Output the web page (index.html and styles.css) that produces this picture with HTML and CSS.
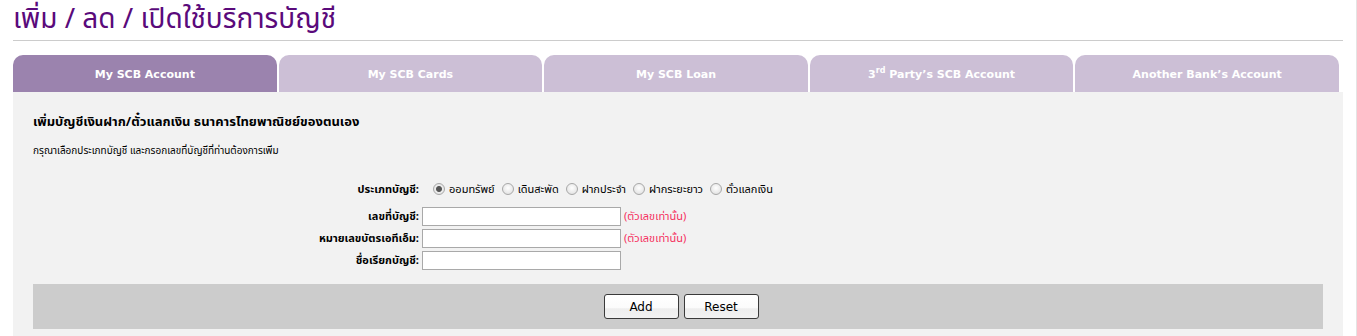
FILE: index.html
```html
<!DOCTYPE html>
<html lang="th">
<head>
  <meta charset="UTF-8">
  <meta name="viewport" content="width=device-width, initial-scale=1.0">
  <title>เพิ่ม / ลด / เปิดใช้บริการบัญชี</title>
  <link rel="stylesheet" href="styles.css">
</head>
<body>
  <div class="page">
    <h1 class="page-title">เพิ่ม / ลด / เปิดใช้บริการบัญชี</h1>

    <!-- Account type tabs -->
    <div class="tabs">
      <div class="tab active">My SCB Account</div>
      <div class="tab">My SCB Cards</div>
      <div class="tab">My SCB Loan</div>
      <div class="tab">3<sup>rd</sup> Party’s SCB Account</div>
      <div class="tab">Another Bank’s Account</div>
    </div>

    <div class="panel">
      <h2 class="panel-title">เพิ่มบัญชีเงินฝาก/ตั๋วแลกเงิน ธนาคารไทยพาณิชย์ของตนเอง</h2>
      <p class="panel-note">กรุณาเลือกประเภทบัญชี และกรอกเลขที่บัญชีที่ท่านต้องการเพิ่ม</p>

      <form id="addAccountForm" class="account-form">
        <div class="row row-radio">
          <label class="row-label">ประเภทบัญชี:</label>
          <div class="radio-group">
            <label><input type="radio" name="type" checked> ออมทรัพย์</label>
            <label><input type="radio" name="type"> เดินสะพัด</label>
            <label><input type="radio" name="type"> ฝากประจำ</label>
            <label><input type="radio" name="type"> ฝากระยะยาว</label>
            <label><input type="radio" name="type"> ตั๋วแลกเงิน</label>
          </div>
        </div>
        <div class="row">
          <label class="row-label" for="acc-no">เลขที่บัญชี:</label>
          <input type="text" id="acc-no" class="text-input">
          <span class="hint">(ตัวเลขเท่านั้น)</span>
        </div>
        <div class="row">
          <label class="row-label" for="atm-no">หมายเลขบัตรเอทีเอ็ม:</label>
          <input type="text" id="atm-no" class="text-input">
          <span class="hint">(ตัวเลขเท่านั้น)</span>
        </div>
        <div class="row">
          <label class="row-label" for="nickname">ชื่อเรียกบัญชี:</label>
          <input type="text" id="nickname" class="text-input">
        </div>

        <div class="button-bar">
          <button type="submit" class="btn">Add</button>
          <button type="reset" class="btn">Reset</button>
        </div>
      </form>
    </div>
  </div>
</body>
</html>
```

FILE: styles.css
```css
/* General Styles */
body {
  margin: 0;
  font-family: Tahoma, "Noto Sans Thai", Loma, Garuda, "DejaVu Sans", sans-serif;
  background-color: #fff;
  color: #000;
  overflow: hidden;
}

.page {
  padding: 0 13px;
  border-right: 1px solid #e4e4e4;
  min-height: 336px;
}

.page-title {
  margin: 0;
  height: 40px;
  line-height: 40px;
  font-size: 28px;
  font-weight: normal;
  color: #5a0a7b;
  border-bottom: 1px solid #cccccc;
  white-space: nowrap;
}

/* Tabs */
.tabs {
  display: flex;
  gap: 2px;
  margin-top: 14px;
  padding-right: 4px;
}

.tab {
  flex: 1;
  height: 37px;
  line-height: 39px;
  text-align: center;
  background: #ccbfd6;
  color: #fff;
  font-family: "DejaVu Sans", sans-serif;
  font-size: 11px;
  font-weight: bold;
  border-radius: 10px 10px 0 0;
}

.tab.active {
  background: #9b83ae;
}

.tab sup {
  font-size: 8px;
  line-height: 0;
}

/* Panel */
.panel {
  background: #f2f2f2;
  padding: 22px 20px 10px;
}

.panel-title {
  margin: 0;
  font-size: 13px;
  line-height: 16px;
  font-weight: bold;
}

.panel-note {
  margin: 14px 0 0;
  font-size: 10px;
  line-height: 14px;
}

/* Form */
.account-form {
  margin-top: 19px;
  font-size: 11px;
}

.row {
  display: flex;
  align-items: center;
  height: 22px;
}

.row-radio {
  height: 24px;
  margin-bottom: 4px;
}

.row-label {
  width: 386px;
  flex-shrink: 0;
  text-align: right;
  font-weight: bold;
  padding-right: 3px;
}

.row-radio .row-label {
  padding-right: 14px;
}

.radio-group {
  display: flex;
  gap: 7px;
}

.radio-group label {
  display: flex;
  align-items: center;
  gap: 4px;
}

.radio-group input {
  appearance: none;
  width: 12px;
  height: 12px;
  margin: 0;
  border: 1px solid #a8a8a8;
  border-radius: 50%;
  background: radial-gradient(circle at 50% 40%, #ffffff 0%, #e6e6e6 70%, #d0d0d0 100%);
}

.radio-group input:checked {
  background: radial-gradient(circle, #555 0, #555 2.5px, #ececec 3.5px, #dcdcdc 100%);
}

.text-input {
  width: 199px;
  height: 19px;
  box-sizing: border-box;
  border: 1px solid #a9a9a9;
  background: #fff;
  margin: 0;
  padding: 1px 3px;
  font-size: 11px;
}

.hint {
  margin-left: 3px;
  color: #f5305e;
}

/* Buttons */
.button-bar {
  display: flex;
  justify-content: center;
  gap: 5px;
  margin-top: 13px;
  padding: 10px 0 10px 6px;
  height: 25px;
  background: #cccccc;
}

.btn {
  width: 75px;
  height: 25px;
  padding: 0;
  border: 1px solid #3a3a3a;
  border-radius: 3px;
  background: linear-gradient(#ffffff 0%, #fbfbfb 55%, #eeeeee 60%, #f2f2f2 100%);
  font-family: "DejaVu Sans", sans-serif;
  font-size: 12px;
  color: #000;
  cursor: pointer;
}
```
